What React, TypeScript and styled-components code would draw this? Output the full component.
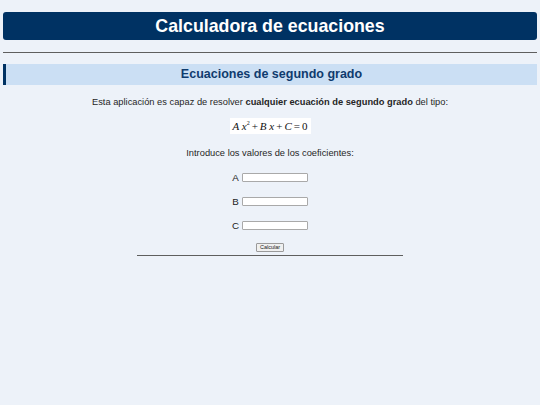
import { FunctionComponent } from 'react';
import styled, { createGlobalStyle } from 'styled-components';

const GlobalStyle = createGlobalStyle`
  html, body {
    margin: 0;
    padding: 0;
    background: #edf2f9;
  }
  body {
    font-family: 'Liberation Sans', Arial, sans-serif;
    color: #222;
  }
`;

const SPage = styled.div`
  padding: 12px 3px;
`;

const STitle = styled.h1`
  margin: 0;
  height: 28px;
  line-height: 28px;
  background: #003263;
  border-radius: 3px;
  color: #fff;
  font-size: 17.8px;
  font-weight: bold;
  text-align: center;
`;

const SRule = styled.hr<{ $narrow?: boolean }>`
  margin: ${({ $narrow }) => ($narrow ? '3px auto 0' : '12px 0 0')};
  width: ${({ $narrow }) => ($narrow ? '266px' : 'auto')};
  height: 0;
  border: none;
  border-top: 1px solid #5f5f5f;
`;

const SSection = styled.h2`
  margin: 11px 0 0;
  height: 21px;
  line-height: 21px;
  background: #cbdff4;
  border-left: 3px solid #003263;
  color: #0f3b6e;
  font-size: 12.5px;
  font-weight: bold;
  text-align: center;
`;

const SText = styled.p<{ $top: number }>`
  margin: ${({ $top }) => $top}px 0 0;
  line-height: 12px;
  font-size: 9.3px;
  text-align: center;
  color: #262626;
`;

const SEquation = styled.div`
  margin: 10px auto 0;
  width: 81px;
  height: 16px;
  background: #fff;
  display: flex;
  align-items: center;
  justify-content: center;
  gap: 2px;
  font-family: 'Liberation Serif', 'Times New Roman', serif;
  font-size: 11px;
  color: #111;
`;

const SVar = styled.i`
  font-style: italic;
`;

const SPower = styled.sup`
  font-size: 6px;
`;

const SForm = styled.form`
  display: flex;
  flex-direction: column;
  align-items: center;
`;

const SRow = styled.label`
  margin-top: 12px;
  height: 12px;
  display: flex;
  align-items: center;
  gap: 3px;
  font-size: 9.8px;
  color: #222;
`;

const SInput = styled.input`
  box-sizing: border-box;
  width: 66px;
  height: 9px;
  padding: 0;
  background: #fff;
  border: 1px solid #a9a9a9;
  border-radius: 1px;
`;

const SButton = styled.button`
  margin-top: 12px;
  box-sizing: border-box;
  width: 28px;
  height: 9px;
  padding: 0;
  background: #f0f0f0;
  border: 1px solid #9a9a9a;
  border-radius: 1px;
  font-family: 'Liberation Sans', Arial, sans-serif;
  font-size: 5.5px;
  line-height: 7px;
  color: #222;
`;

const coefficients = ['A', 'B', 'C'];

const App: FunctionComponent = () => {
  return (
    <SPage>
      <GlobalStyle />
      <STitle>Calculadora de ecuaciones</STitle>
      <SRule />
      <SSection>Ecuaciones de segundo grado</SSection>
      <SText $top={11}>
        Esta aplicación es capaz de resolver{' '}
        <strong>cualquier ecuación de segundo grado</strong> del tipo:
      </SText>
      <SEquation>
        <span>
          <SVar>A x</SVar>
          <SPower>2</SPower>
        </span>
        <span>+</span>
        <SVar>B x</SVar>
        <span>+</span>
        <SVar>C</SVar>
        <span>=</span>
        <span>0</span>
      </SEquation>
      <SText $top={13}>Introduce los valores de los coeficientes:</SText>
      <SForm onSubmit={(e) => e.preventDefault()}>
        {coefficients.map((c) => (
          <SRow key={c}>
            {c}
            <SInput type='text' />
          </SRow>
        ))}
        <SButton type='submit'>Calcular</SButton>
      </SForm>
      <SRule $narrow />
    </SPage>
  );
};

export default App;
